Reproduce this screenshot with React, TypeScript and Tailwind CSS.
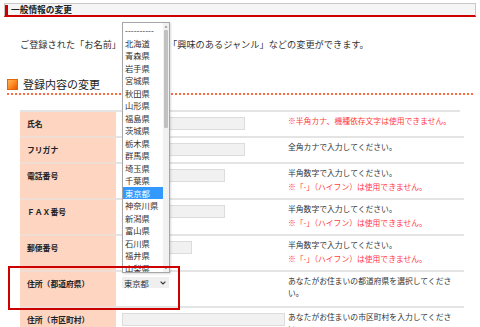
import React from "react";

type Note = { t: string; red: boolean };
type Row = {
  label: string;
  h: string;
  field: "input" | "select";
  w: string;
  notes: Note[];
};

const hyphenNote: Note = { t: "※「-」（ハイフン）は使用できません。", red: true };
const halfNum: Note = { t: "半角数字で入力してください。", red: false };

const rows: Row[] = [
  { label: "氏名", h: "h-[26px]", field: "input", w: "w-[123px]", notes: [{ t: "※半角カナ、機種依存文字は使用できません。", red: true }] },
  { label: "フリガナ", h: "h-[26px]", field: "input", w: "w-[123px]", notes: [{ t: "全角カナで入力してください。", red: false }] },
  { label: "電話番号", h: "h-[36px]", field: "input", w: "w-[103px]", notes: [halfNum, hyphenNote] },
  { label: "ＦＡＸ番号", h: "h-[36px]", field: "input", w: "w-[103px]", notes: [halfNum, hyphenNote] },
  { label: "郵便番号", h: "h-[36px]", field: "input", w: "w-[70px]", notes: [halfNum, hyphenNote] },
  { label: "住所（都道府県）", h: "h-[36px]", field: "select", w: "w-[47px]", notes: [{ t: "あなたがお住まいの都道府県を選択してください。", red: false }] },
  { label: "住所（市区町村）", h: "h-[36px]", field: "input", w: "w-[163px]", notes: [{ t: "あなたがお住まいの市区町村を入力してください。", red: false }] },
];

const prefs = [
  "----------",
  "北海道",
  "青森県",
  "岩手県",
  "宮城県",
  "秋田県",
  "山形県",
  "福島県",
  "茨城県",
  "栃木県",
  "群馬県",
  "埼玉県",
  "千葉県",
  "東京都",
  "神奈川県",
  "新潟県",
  "富山県",
  "石川県",
  "福井県",
  "山梨県",
];

export default function App() {
  return (
    <div className="relative w-[480px] h-[327px] overflow-hidden bg-white text-[#333] font-['Noto_Sans_CJK_JP','Noto_Sans',sans-serif]">
      {/* top bar */}
      <div className="mx-[4px] mt-[3px] h-[14px] border border-[#c8c8c8] border-b-2 border-b-[#cc0000] bg-[#f5f5f5] flex items-center">
        <div className="w-[3px] h-[10px] bg-[#cc0000]" />
        <div className="ml-[3px] text-[8.7px] leading-[10px] font-bold text-[#222]">一般情報の変更</div>
      </div>

      {/* intro */}
      <p className="mt-[21px] pl-[20px] text-[9.2px] leading-[12px] whitespace-nowrap flex">
        <span>ご登録された「お名前」</span>
        <span className="inline-block w-[47px]" />
        <span>「興味のあるジャンル」などの変更ができます。</span>
      </p>

      {/* heading */}
      <div className="mt-[28px] pl-[7px] h-[12px] flex items-center">
        <div className="w-[11px] h-[11px] bg-gradient-to-br from-[#ffb255] via-[#ff8a1e] to-[#e55300] border border-[#e0660a]" />
        <div className="ml-[5px] text-[11px] leading-[12px] text-[#222]">登録内容の変更</div>
      </div>
      <div className="mt-[3px] mx-[7px] border-t-2 border-dotted border-[#ff6a40]" />

      {/* table */}
      <div className="mt-[15px] ml-[20px] w-[440px] border-t-2 border-[#e4e4e4]">
        {rows.map((r) => (
          <div key={r.label} className={`flex ${r.h}`}>
            <div className="w-[96px] shrink-0 bg-[#fdd5c1] border-b-2 border-[#f0ddd4] pl-[7px] pt-[7px] text-[7.8px] leading-[10px] font-bold text-[#222] whitespace-nowrap">
              {r.label}
            </div>
            <div className="w-[170px] shrink-0 border-b-2 border-[#e4e4e4] pl-[6px] pt-[5px]">
              {r.field === "input" ? (
                <div className={`${r.w} h-[13px] bg-[#f1f1f1] border border-[#dcdcdc]`} />
              ) : (
                <div className={`${r.w} h-[11px] bg-[#efefef] flex items-center justify-between pl-[2px] pr-[3px]`}>
                  <span className="text-[8.3px] leading-[10px] text-[#333]">東京都</span>
                  <svg width="6" height="4" viewBox="0 0 6 4">
                    <path d="M0.6 0.6 L3 3 L5.4 0.6" fill="none" stroke="#333" strokeWidth="1.1" />
                  </svg>
                </div>
              )}
            </div>
            <div className="flex-1 border-b-2 border-[#e4e4e4] pl-[2px] pt-[3px]">
              <div className="w-[176px]">
                {r.notes.map((n, i) => (
                  <div
                    key={i}
                    className={`text-[7.8px] leading-[11.5px] ${n.red ? "text-[#ff3c3c]" : "text-[#333]"} ${i > 0 ? "mt-[2.5px]" : ""}`}
                  >
                    {n.t}
                  </div>
                ))}
              </div>
            </div>
          </div>
        ))}
      </div>

      {/* open dropdown list */}
      <div className="absolute left-[122px] top-[22px] w-[48px] h-[251px] border border-[#a6a6a6] bg-white shadow-[1px_1px_2px_rgba(0,0,0,0.15)] flex overflow-hidden">
        <div className="flex-1 pt-[1px]">
          {prefs.map((p) => (
            <div
              key={p}
              className={`h-[12.5px] pl-[2px] text-[8.3px] leading-[12.5px] whitespace-nowrap ${
                p === "東京都" ? "bg-[#3399ff] text-white" : "text-[#333]"
              }`}
            >
              {p}
            </div>
          ))}
        </div>
        <div className="w-[6px] shrink-0 bg-[#f1f1f1] flex flex-col items-center">
          <svg width="6" height="5" viewBox="0 0 6 5" className="mt-[1px]">
            <path d="M1.5 3.5 L3 1.8 L4.5 3.5 Z" fill="#777" />
          </svg>
          <div className="w-[4px] h-[98px] mt-[1px] bg-[#c1c1c1] rounded-[1px]" />
          <div className="flex-1" />
          <svg width="6" height="5" viewBox="0 0 6 5" className="mb-[1px]">
            <path d="M1.5 1.5 L3 3.2 L4.5 1.5 Z" fill="#777" />
          </svg>
        </div>
      </div>

      {/* annotation rectangle */}
      <div className="absolute left-[8px] top-[266px] w-[172px] h-[44px] border-2 border-[#cc0000]" />
    </div>
  );
}
